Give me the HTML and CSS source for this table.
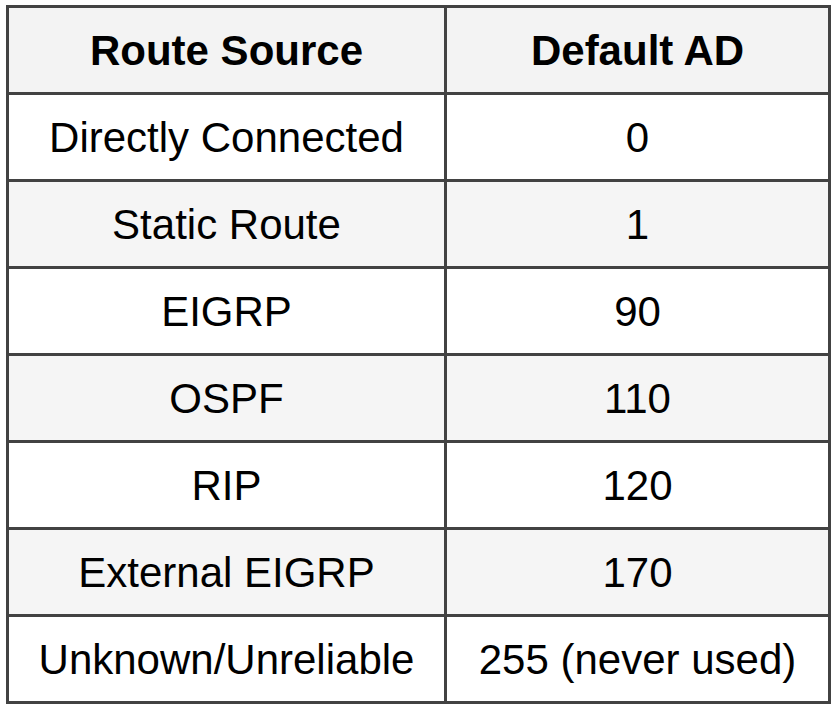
FILE: index.html
```html
<!DOCTYPE html>
<html>
<head>
<meta charset="utf-8">
<link rel="stylesheet" href="styles.css">
</head>
<body>
<table class="ad-table">
  <colgroup>
    <col class="col-source">
    <col class="col-ad">
  </colgroup>
  <thead>
    <tr class="row head">
      <th>Route Source</th>
      <th>Default AD</th>
    </tr>
  </thead>
  <tbody>
    <tr class="row"><td>Directly Connected</td><td>0</td></tr>
    <tr class="row alt"><td>Static Route</td><td>1</td></tr>
    <tr class="row"><td>EIGRP</td><td>90</td></tr>
    <tr class="row alt"><td>OSPF</td><td>110</td></tr>
    <tr class="row"><td>RIP</td><td>120</td></tr>
    <tr class="row alt"><td>External EIGRP</td><td>170</td></tr>
    <tr class="row"><td>Unknown/Unreliable</td><td>255 (never used)</td></tr>
  </tbody>
</table>
</body>
</html>
```
FILE: styles.css
```css
html, body {
  margin: 0;
  padding: 0;
  background: #ffffff;
}
body {
  padding: 5px 6px;
  font-family: "Liberation Sans", Arial, sans-serif;
  color: #000000;
}
.ad-table {
  border-collapse: collapse;
  table-layout: fixed;
  width: 822px;
  border: 3px solid #424242;
}
.col-source { width: 438px; }
.col-ad { width: 384px; }
.row { height: 87px; }
.ad-table th,
.ad-table td {
  border: 3px solid #424242;
  padding: 2px 0 0;
  text-align: center;
  vertical-align: middle;
  font-size: 42px;
  line-height: 1;
  white-space: nowrap;
}
.ad-table th { font-weight: bold; }
.head { background: #f3f3f3; }
.alt { background: #f5f5f5; }
```
